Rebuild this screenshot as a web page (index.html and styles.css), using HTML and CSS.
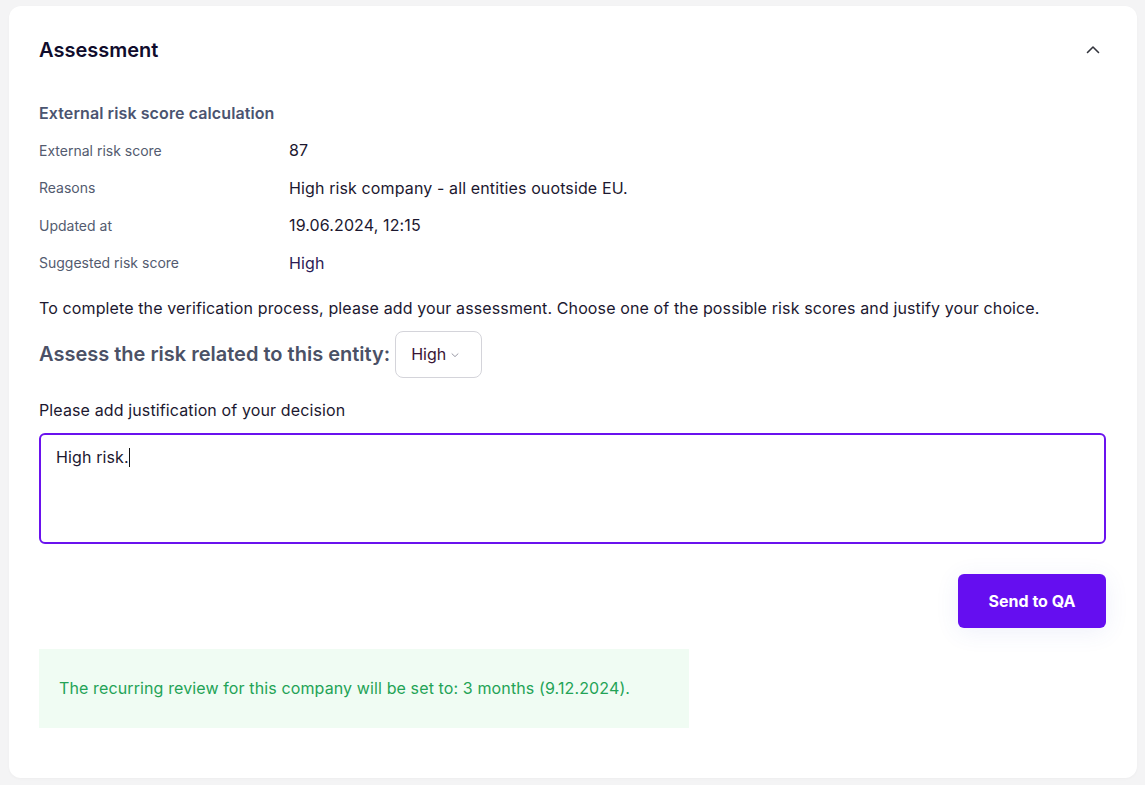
FILE: index.html
```html
<!DOCTYPE html>
<html lang="en">
<head>
<meta charset="utf-8">
<title>Assessment</title>
<link rel="stylesheet" href="styles.css">
</head>
<body>
<section class="card">
  <header class="card-header">
    <h2 class="card-title">Assessment</h2>
    <button class="collapse-btn" aria-label="Collapse">
      <svg width="16" height="16" viewBox="0 0 16 16" fill="none"><path d="M2.5 10.5 L8 5 L13.5 10.5" stroke="#33353d" stroke-width="1.6" stroke-linecap="round" stroke-linejoin="round"/></svg>
    </button>
  </header>

  <h3 class="sub-title">External risk score calculation</h3>
  <dl class="details">
    <div class="row"><dt>External risk score</dt><dd>87</dd></div>
    <div class="row"><dt>Reasons</dt><dd>High risk company - all entities ouotside EU.</dd></div>
    <div class="row"><dt>Updated at</dt><dd>19.06.2024, 12:15</dd></div>
    <div class="row"><dt>Suggested risk score</dt><dd class="suggested">High</dd></div>
  </dl>

  <p class="intro">To complete the verification process, please add your assessment. Choose one of the possible risk scores and justify your choice.</p>

  <div class="assess-row">
    <span class="assess-label">Assess the risk related to this entity:</span>
    <div class="select">
      <span>High</span>
      <svg width="10" height="10" viewBox="0 0 10 10" fill="none"><path d="M2 3.8 L5 6.6 L8 3.8" stroke="#9a9aa6" stroke-width="1" stroke-linecap="round" stroke-linejoin="round"/></svg>
    </div>
  </div>

  <label class="just-label">Please add justification of your decision</label>
  <div class="textbox" role="textbox">High risk.<span class="caret"></span></div>

  <div class="actions">
    <button class="primary-btn">Send to QA</button>
  </div>

  <div class="notice">The recurring review for this company will be set to: 3 months (9.12.2024).</div>
</section>
</body>
</html>
```
FILE: styles.css
```css
* { box-sizing: border-box; }
html, body { margin: 0; }
body {
  background: #f4f4f5;
  padding: 6px 8px 7px 9px;
  font-family: Inter, "Noto Sans", sans-serif;
  color: #1d1a2e;
}
.card {
  background: #ffffff;
  border-radius: 12px;
  padding: 30px 31px 50px 30px;
  box-shadow: 0 1px 3px rgba(0,0,0,0.03);
  display: flex;
  flex-direction: column;
}
.card-header {
  display: flex;
  align-items: center;
  justify-content: space-between;
  height: 28px;
}
.card-title {
  margin: 0;
  font-size: 20px;
  line-height: 28px;
  font-weight: 600;
  color: #100c2c;
}
.collapse-btn {
  border: 0;
  background: none;
  padding: 0;
  margin-right: 5px;
  width: 16px;
  height: 16px;
  display: flex;
  cursor: pointer;
}
.sub-title {
  margin: 37px 0 0;
  font-size: 16px;
  line-height: 24px;
  font-weight: 600;
  color: #4b5470;
  letter-spacing: 0.1px;
}
.details {
  margin: 13px 0 0;
  display: flex;
  flex-direction: column;
  gap: 13.5px;
}
.row {
  display: grid;
  grid-template-columns: 250px 1fr;
  align-items: center;
  height: 24px;
}
.row dt {
  font-size: 14px;
  color: #535b6f;
}
.row dd {
  margin: 0;
  font-size: 16px;
  color: #1c1830;
  letter-spacing: 0.12px;
}
.row dd.suggested { color: #2b1a55; }
.intro {
  margin: 21px 0 0;
  font-size: 16px;
  line-height: 24px;
  color: #1c1830;
  letter-spacing: 0.12px;
}
.assess-row {
  margin-top: 11px;
  display: flex;
  align-items: center;
  gap: 5px;
}
.assess-label {
  font-size: 20px;
  font-weight: 600;
  color: #4b5166;
}
.select {
  height: 47px;
  width: 87px;
  border: 1px solid #d4d4da;
  border-radius: 8px;
  display: flex;
  align-items: center;
  padding-left: 15px;
  gap: 4px;
  font-size: 16px;
  color: #3a1434;
}
.select svg { margin-top: 1px; }
.just-label {
  margin-top: 20px;
  font-size: 16px;
  line-height: 24px;
  color: #1c1830;
  letter-spacing: 0.12px;
}
.textbox {
  margin-top: 11px;
  height: 111px;
  border: 2px solid #6a12ee;
  border-radius: 6px;
  padding: 10px 15px;
  font-size: 16px;
  line-height: 24px;
  color: #1c1830;
  letter-spacing: 0.12px;
}
.caret {
  display: inline-block;
  width: 1px;
  height: 19px;
  background: #111;
  vertical-align: -4px;
}
.actions {
  margin-top: 30px;
  display: flex;
  justify-content: flex-end;
}
.primary-btn {
  width: 148px;
  height: 54px;
  border: 0;
  border-radius: 6px;
  background: #650ef0;
  color: #ffffff;
  font-family: Inter, sans-serif;
  font-size: 16px;
  font-weight: 700;
  box-shadow: 0 4px 24px rgba(70, 90, 200, 0.09);
  cursor: pointer;
}
.notice {
  margin-top: 21px;
  width: 650px;
  height: 79px;
  background: #f0fcf3;
  display: flex;
  align-items: center;
  padding: 0 20px;
  font-family: Inter, sans-serif;
  font-size: 16px;
  color: #23a356;
  letter-spacing: 0.12px;
}
```
